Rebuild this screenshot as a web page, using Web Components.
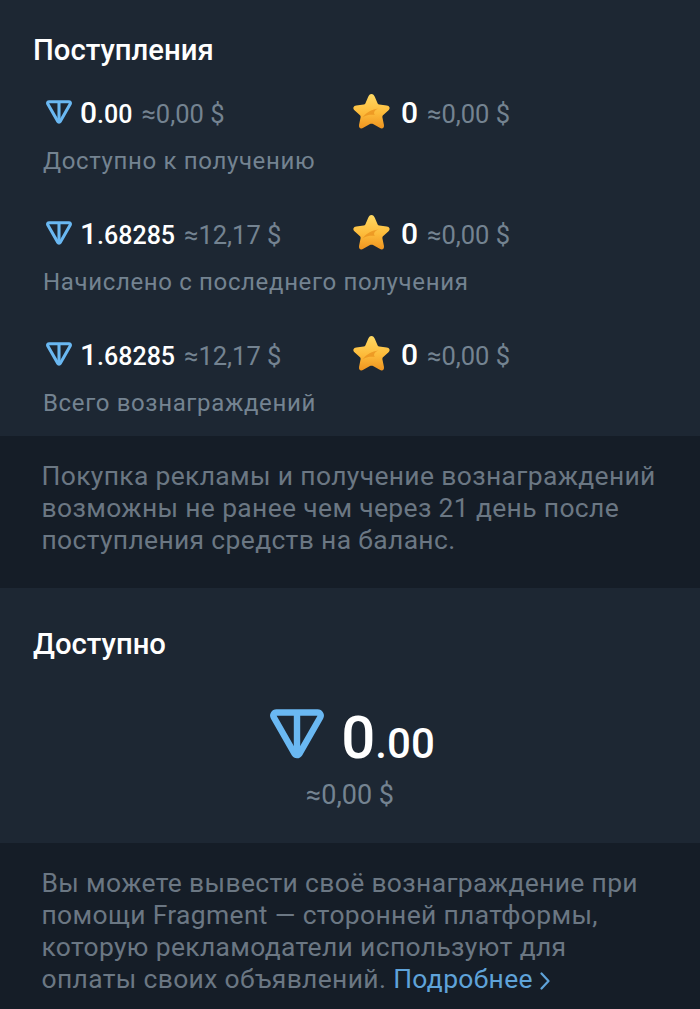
<!DOCTYPE html>
<html>
<head>
<meta charset="utf-8">
<style>
  html, body { margin: 0; padding: 0; background: #151d27; }
  body { font-family: Roboto, "Liberation Sans", sans-serif; width: 700px; height: 1009px; overflow: hidden; }
</style>
</head>
<body>
<template id="ton-tpl">
  <style>
    :host { display: inline-flex; flex: none; }
    svg { display: block; width: 100%; height: 100%; }
  </style>
  <svg viewBox="0 0 54 50" fill="none">
    <path d="M6.5 3.5H47.5C50 3.5 51.5 6 50.3 8.2L29.5 44.6C28.3 46.6 25.7 46.6 24.5 44.6L3.7 8.2C2.5 6 4 3.5 6.5 3.5Z" stroke="#6ab8f2" stroke-width="6.4" stroke-linejoin="round"/>
    <path d="M27 4V45" stroke="#6ab8f2" stroke-width="6.4"/>
  </svg>
</template>

<template id="star-tpl">
  <style>
    :host { display: inline-flex; flex: none; }
    svg { display: block; width: 100%; height: 100%; }
  </style>
  <svg viewBox="0 0 38 37">
    <defs>
      <linearGradient id="g" x1="0.5" y1="0" x2="0.5" y2="1">
        <stop offset="0" stop-color="#ffd964"/>
        <stop offset="0.55" stop-color="#fdbb3a"/>
        <stop offset="1" stop-color="#ee9420"/>
      </linearGradient>
    </defs>
    <path d="M19 1.5C20.6 1.5 21.5 2.6 22.2 4.2L25 10.6C25.3 11.3 25.9 11.7 26.6 11.8L33.8 12.6C36.6 12.9 37.6 15.4 35.6 17.2L30.2 22.2C29.7 22.7 29.5 23.3 29.6 24L31.1 31.4C31.7 34.3 29.6 35.9 27 34.4L20.5 30.7C19.6 30.2 18.4 30.2 17.5 30.7L11 34.4C8.4 35.9 6.3 34.3 6.9 31.4L8.4 24C8.5 23.3 8.3 22.7 7.8 22.2L2.4 17.2C0.4 15.4 1.4 12.9 4.2 12.6L11.4 11.8C12.1 11.7 12.7 11.3 13 10.6L15.8 4.2C16.5 2.6 17.4 1.5 19 1.5Z" fill="url(#g)"/>
    <path d="M25.5 15.5C20 16.5 14 19 10.5 24C15 21.5 19 21.5 22.5 22C20.5 20 21.5 17.5 25.5 15.5Z" fill="#e8901e" opacity="0.75"/>
  </svg>
</template>

<template id="amount-tpl">
  <style>
    :host { display: flex; align-items: baseline; height: 32px; white-space: nowrap; }
    .icon { display: flex; align-self: center; width: var(--icon-w, 28px); height: 26px; align-items: center; }
    .val { color: #fff; font-weight: 500; font-size: 30px; margin-left: var(--val-gap, 6px); }
    .frac { font-size: 25px; }
    .usd { color: #748391; font-size: 25.5px; margin-left: 9px; }
  </style>
  <span class="icon"><slot name="icon"></slot></span>
  <span class="val"><span id="int"></span><span class="frac" id="frac"></span></span>
  <span class="usd" id="usd"></span>
</template>

<template id="stat-tpl">
  <style>
    :host { display: block; height: 121px; }
    .row { display: grid; grid-template-columns: 307px 1fr; padding-left: 46px; }
    .label { color: #748391; font-size: 24px; letter-spacing: 0.65px; margin-top: 19px; padding-left: 43px; line-height: 30px; }
  </style>
  <div class="row"><slot></slot></div>
  <div class="label" id="label"></div>
</template>

<template id="panel-tpl">
  <style>
    :host { display: block; background: #1d2733; box-sizing: border-box; }
    h2 { margin: 0; padding-left: 33px; color: #fff; font-size: 29.3px; font-weight: 500; line-height: 30px; }
  </style>
  <h2 id="title"></h2>
  <slot></slot>
</template>

<template id="note-tpl">
  <style>
    :host { display: block; background: #151d27; color: #6b7783; box-sizing: border-box; padding: 0 40px 0 41.5px; font-size: 26.45px; line-height: 32px; letter-spacing: 0.35px; }
    ::slotted(a) { color: #5fa3d9; text-decoration: none; white-space: nowrap; }
  </style>
  <slot></slot>
</template>

<template id="big-tpl">
  <style>
    :host { display: flex; flex-direction: column; align-items: center; }
    .top { display: flex; align-items: center; height: 66px; margin-left: 5px; }
    .icon { display: flex; width: 54px; height: 50px; margin-right: 17px; margin-top: -14px; }
    .val { color: #fff; font-weight: 500; font-size: 60px; line-height: 66px; }
    .frac { font-size: 42px; font-weight: 500; }
    .usd { color: #748391; font-size: 27px; line-height: 32px; margin-top: 5px; }
  </style>
  <div class="top">
    <span class="icon"><slot name="icon"></slot></span>
    <span class="val"><span id="int"></span><span class="frac" id="frac"></span></span>
  </div>
  <div class="usd" id="usd"></div>
</template>

<rs-panel title="Поступления" style="height:436px;padding-top:35px">
  <rs-stat label="Доступно к получению" style="margin-top:30px">
    <rs-amount int="0" frac=".00" usd="≈0,00 $"><rs-ton slot="icon" style="width:26px;height:24px;margin-top:2px"></rs-ton></rs-amount>
    <rs-amount int="0" usd="≈0,00 $" style="--icon-w:37px;--val-gap:11px"><rs-star slot="icon" style="width:39px;height:39px;margin-left:-1px"></rs-star></rs-amount>
  </rs-stat>
  <rs-stat label="Начислено с последнего получения">
    <rs-amount int="1" frac=".68285" usd="≈12,17 $"><rs-ton slot="icon" style="width:26px;height:24px;margin-top:2px"></rs-ton></rs-amount>
    <rs-amount int="0" usd="≈0,00 $" style="--icon-w:37px;--val-gap:11px"><rs-star slot="icon" style="width:39px;height:39px;margin-left:-1px"></rs-star></rs-amount>
  </rs-stat>
  <rs-stat label="Всего вознаграждений">
    <rs-amount int="1" frac=".68285" usd="≈12,17 $"><rs-ton slot="icon" style="width:26px;height:24px;margin-top:2px"></rs-ton></rs-amount>
    <rs-amount int="0" usd="≈0,00 $" style="--icon-w:37px;--val-gap:11px"><rs-star slot="icon" style="width:39px;height:39px;margin-left:-1px"></rs-star></rs-amount>
  </rs-stat>
</rs-panel>
<rs-note style="height:152px;padding-top:24px">Покупка рекламы и получение вознаграждений возможны не ранее чем через 21 день после поступления средств на баланс.</rs-note>
<rs-panel title="Доступно" style="height:255px;padding-top:41px">
  <rs-big int="0" frac=".00" usd="≈0,00 $" style="margin-top:49px"><rs-ton slot="icon" style="width:54px;height:50px"></rs-ton></rs-big>
</rs-panel>
<rs-note style="height:166px;padding-top:24px">Вы можете вывести своё вознаграждение при помощи Fragment — сторонней платформы, которую рекламодатели используют для <span>оплаты своих объявлений.</span> <a href="#">Подробнее <svg width="10" height="18" viewBox="0 0 10 18" fill="none" style="vertical-align:-2px"><path d="M1.5 1.5L8.5 9L1.5 16.5" stroke="#5fa3d9" stroke-width="2.2" stroke-linecap="round" stroke-linejoin="round"/></svg></a></rs-note>

<script>
  class Base extends HTMLElement {
    constructor(id) {
      super();
      this._shadowRoot = this.attachShadow({ mode: 'open' });
      this._shadowRoot.appendChild(document.getElementById(id).content.cloneNode(true));
    }
    fill(keys) {
      for (const key of keys) {
        const el = this._shadowRoot.getElementById(key);
        if (el) el.textContent = this.getAttribute(key) || '';
      }
    }
  }

  class RsTon extends Base { constructor() { super('ton-tpl'); } }
  class RsStar extends Base { constructor() { super('star-tpl'); } }
  class RsNote extends Base { constructor() { super('note-tpl'); } }
  class RsAmount extends Base {
    constructor() { super('amount-tpl'); }
    connectedCallback() { this.fill(['int', 'frac', 'usd']); }
  }
  class RsBig extends Base {
    constructor() { super('big-tpl'); }
    connectedCallback() { this.fill(['int', 'frac', 'usd']); }
  }
  class RsStat extends Base {
    constructor() { super('stat-tpl'); }
    connectedCallback() { this.fill(['label']); }
  }
  class RsPanel extends Base {
    constructor() { super('panel-tpl'); }
    connectedCallback() { this.fill(['title']); }
  }

  customElements.define('rs-ton', RsTon);
  customElements.define('rs-star', RsStar);
  customElements.define('rs-note', RsNote);
  customElements.define('rs-amount', RsAmount);
  customElements.define('rs-big', RsBig);
  customElements.define('rs-stat', RsStat);
  customElements.define('rs-panel', RsPanel);
</script>
</body>
</html>
